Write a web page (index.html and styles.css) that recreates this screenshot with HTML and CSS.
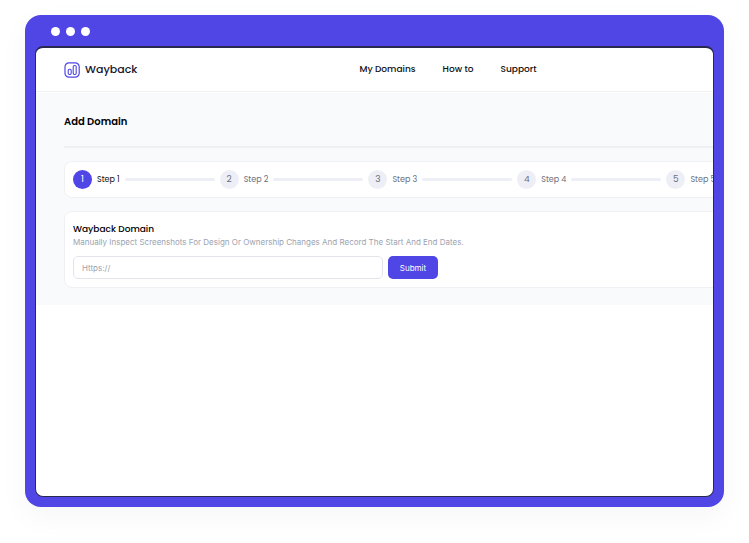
FILE: index.html
```html
<!DOCTYPE html>
<html lang="en">

<head>
    <meta charset="UTF-8">
    <meta name="viewport" content="width=device-width, initial-scale=1.0">
    <title>Wayback - Add Domain</title>
    <link rel="stylesheet" href="styles.css">
</head>

<body>
    <div class="window">
        <div class="titlebar">
            <span class="dot"></span>
            <span class="dot"></span>
            <span class="dot"></span>
        </div>
        <div class="screen">
            <div class="page">
                <header class="header">
                    <a href="#" class="logo">
                        <svg class="logo-icon" viewBox="0 0 16 16" fill="none" stroke="#4f46e5" aria-hidden="true">
                            <rect x="1" y="0.8" width="14.2" height="14.4" rx="4" stroke-width="1.2" />
                            <rect x="4.2" y="7.3" width="3" height="5.2" rx="1.2" stroke-width="1.1" />
                            <rect x="9.2" y="3.5" width="3" height="9" rx="1.2" stroke-width="1.1" />
                        </svg>
                        Wayback
                    </a>
                    <nav class="nav">
                        <a href="#">My Domains</a>
                        <a href="#">How to</a>
                        <a href="#">Support</a>
                    </nav>
                </header>
                <main class="main">
                    <h1>Add Domain</h1>
                    <ol class="card steps">
                        <li class="step active"><span class="number">1</span>Step 1</li>
                        <li class="step"><span class="number">2</span>Step 2</li>
                        <li class="step"><span class="number">3</span>Step 3</li>
                        <li class="step"><span class="number">4</span>Step 4</li>
                        <li class="step"><span class="number">5</span>Step 5</li>
                    </ol>
                    <form class="card domain-form">
                        <h2><label for="domain">Wayback Domain</label></h2>
                        <p>Manually Inspect Screenshots For Design Or Ownership Changes And Record The Start And End Dates.</p>
                        <div class="form-row">
                            <input type="text" id="domain" placeholder="Https://">
                            <button type="submit">Submit</button>
                        </div>
                    </form>
                </main>
            </div>
        </div>
    </div>
</body>

</html>
```

FILE: styles.css
```css
* {
    box-sizing: border-box;
}

body {
    margin: 0;
    min-height: 100vh;
    padding: 15px 25px 36px;
    display: flex;
    font-family: Poppins, Inter, sans-serif;
    font-size: 8px;
    background: #fff;
    color: #111;
}

a {
    color: inherit;
    text-decoration: none;
}

.window {
    flex: 1;
    min-width: 0;
    display: flex;
    flex-direction: column;
    padding: 0 10px 10px;
    border-radius: 16px;
    background: #4f46e5;
    box-shadow: 0 10px 30px rgba(0, 0, 0, 0.04);
}

.titlebar {
    display: flex;
    align-items: center;
    gap: 6px;
    height: 31px;
    padding: 2px 16px 0;
}

.dot {
    width: 9px;
    height: 9px;
    border-radius: 50%;
    background: #fff;
}

.screen {
    flex: 1;
    overflow: hidden;
    border: 1px solid #29294f;
    border-top-width: 2px;
    border-radius: 8px;
    background: #fff;
}

/* wider than the screen, the right side is cut off */
.page {
    width: 814px;
}

.header {
    display: flex;
    align-items: center;
    height: 44px;
    padding: 0 28px;
    border-bottom: 1px solid #eff0f3;
}

.logo {
    display: flex;
    align-items: center;
    gap: 5px;
    font-size: 11px;
    font-weight: 500;
    color: #14162e;
}

.logo-icon {
    width: 16px;
    height: 16px;
}

.nav {
    display: flex;
    gap: 27px;
    margin-left: 222px;
    font-size: 9px;
    font-weight: 500;
}

.main {
    margin-top: 1px;
    padding: 0 28px 17px;
    background: #f8fafc;
}

h1 {
    margin: 0 0 13px;
    padding: 21px 0 16px;
    border-bottom: 2px solid #eff0f4;
    font-size: 10px;
    line-height: 16px;
    font-weight: 600;
    color: #000;
}

.card {
    margin: 0;
    padding: 8px;
    border: 1px solid #eff0f4;
    border-radius: 8px;
    background: #fff;
}

.steps {
    display: flex;
    gap: 5px;
    margin-bottom: 13px;
    list-style: none;
}

.step {
    display: flex;
    align-items: center;
    gap: 5px;
    color: #6b7080;
}

.step::after {
    content: "";
    width: 90px;
    height: 3px;
    border-radius: 2px;
    background: #eeeff6;
}

.number {
    width: 19px;
    border-radius: 50%;
    background: #eeeff6;
    font-size: 9px;
    line-height: 19px;
    text-align: center;
}

.active {
    color: #111;
}

.active .number {
    background: #4f46e5;
    color: #fff;
}

.domain-form h2 {
    margin: 3px 0 0;
    font-size: 9px;
    line-height: 13px;
    font-weight: 500;
    color: #000;
}

.domain-form p {
    margin: 0 0 7px;
    font-family: Inter, sans-serif;
    line-height: 13px;
    color: #9ca3af;
}

.form-row {
    display: flex;
    gap: 5px;
}

input,
button {
    height: 23px;
    border-radius: 5px;
    font-family: Inter, sans-serif;
    font-size: 8px;
}

input {
    width: 310px;
    padding: 0 8px;
    border: 1px solid #e2e4e9;
    background: #fff;
}

input::placeholder {
    color: #9ca3af;
}

button {
    width: 50px;
    padding: 0;
    border: none;
    background: #4f46e5;
    color: #fff;
    cursor: pointer;
}
```
